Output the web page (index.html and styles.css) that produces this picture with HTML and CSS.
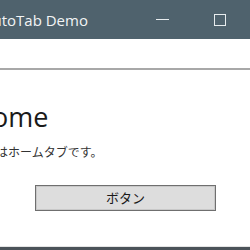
FILE: index.html
```html
<!DOCTYPE html>
<html>
  <head>
    <meta charset="UTF-8">
    <title>AutoTab Demo</title>
    <link rel="stylesheet" href="styles.css">
  </head>
  <body>
  <div class=window>
    <div class=titlebar>
      <div class=title>AutoTab Demo</div>
      <div class=caption id=min><span class=minline></span></div>
      <div class=caption id=max><span class=maxbox></span></div>
      <div class=caption id=close></div>
    </div>
    <div class=tabstrip></div>
    <div class=page>
      <h1>Home</h1>
      <p>これはホームタブです。</p>
      <div class=row>
        <button class=btn>ボタン</button>
      </div>
    </div>
    <div class=taskbar></div>
  </div>
  </body>
</html>
```

FILE: styles.css
```css
body {
  margin: 0;
  background-color: #ffffff;
  overflow: hidden;
  }

/* the window is wider than the view: its left edge and close button are cut off */
.window {
  width: 307px;
  height: 250px;
  display: flex;
  flex-direction: column;
  overflow: hidden;
  }

.titlebar {
  height: 39px;
  flex: none;
  display: flex;
  align-items: center;
  background-color: #4f626d;
  color: #f2f4f5;
  }

.title {
  flex: 1;
  margin-left: -17px;
  font-family: "Open Sans", "Noto Sans", sans-serif;
  font-size: 15px;
  white-space: nowrap;
  }

.caption {
  width: 58px;
  height: 39px;
  flex: none;
  display: flex;
  align-items: center;
  justify-content: center;
  }

.minline {
  width: 13px;
  height: 1px;
  background-color: #e8ecee;
  }

.maxbox {
  width: 10px;
  height: 10px;
  border: 1.5px solid #e8ecee;
  }

.tabstrip {
  height: 29px;
  flex: none;
  border-bottom: 2px solid #a8a8a8;
  }

.page {
  flex: 1;
  margin-left: -28px;
  padding-top: 30px;
  font-family: "Noto Sans CJK JP", sans-serif;
  color: #1a1a1a;
  }

h1 {
  margin: 0;
  font-family: "Open Sans", "Noto Sans", sans-serif;
  font-weight: normal;
  font-size: 27px;
  line-height: 34px;
  }

p {
  margin: 9px 0 0 0;
  font-size: 12px;
  line-height: 18px;
  color: #333333;
  }

.row {
  padding: 23px 0 0 63px;
  }

.btn {
  width: 181px;
  height: 26px;
  border: 1px solid #6f6f6f;
  box-shadow: inset 0 0 0 1px #c8c8c8;
  background-color: #dddddd;
  font-family: "Noto Sans CJK JP", sans-serif;
  font-size: 13px;
  color: #1a1a1a;
  }

.taskbar {
  height: 3px;
  flex: none;
  background-color: #4b5359;
  border-top: 1px solid #e4e4e4;
  }
```
